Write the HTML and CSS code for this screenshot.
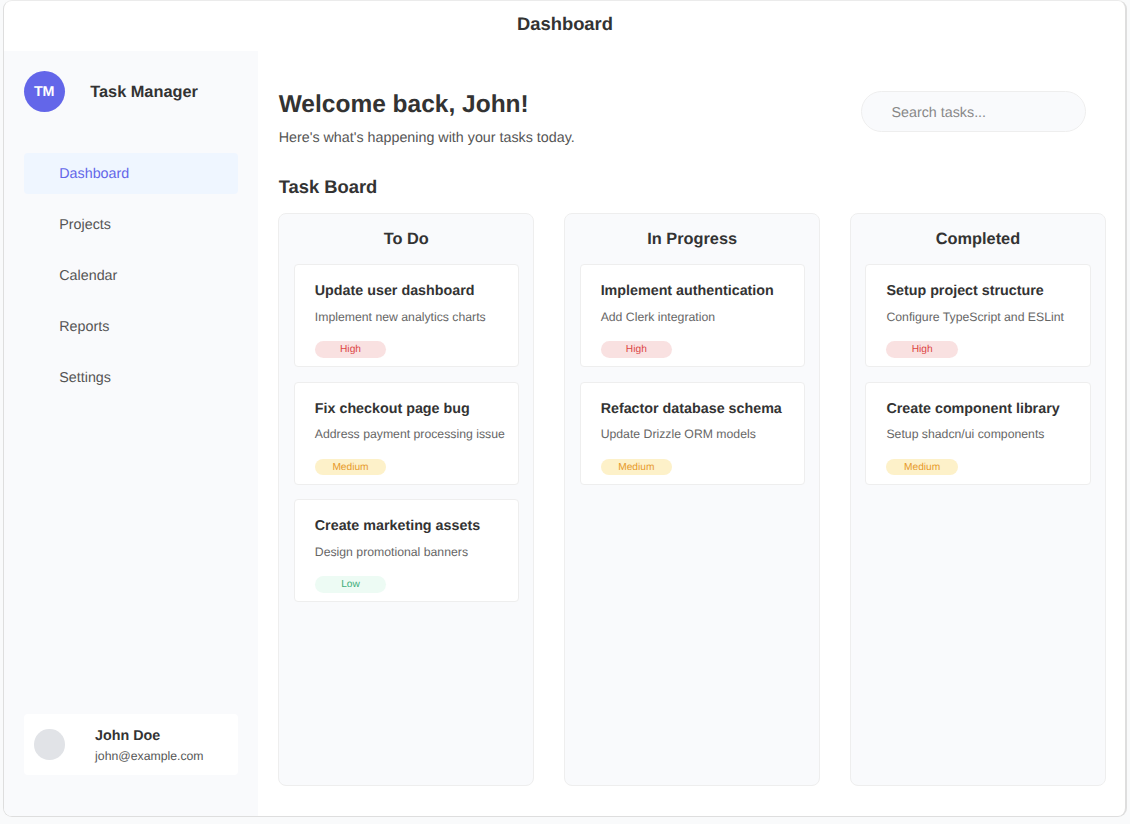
FILE: index.html
```html
<!DOCTYPE html>
<html lang="en">
<head>
<meta charset="utf-8">
<title>Dashboard</title>
<link rel="stylesheet" href="styles.css">
</head>
<body>
<div class="window">
  <header class="titlebar">Dashboard</header>
  <div class="body">
    <aside class="sidebar">
      <div class="brand"><span class="logo">TM</span><span class="brand-name">Task Manager</span></div>
      <nav class="nav">
        <a class="nav-item active">Dashboard</a>
        <a class="nav-item">Projects</a>
        <a class="nav-item">Calendar</a>
        <a class="nav-item">Reports</a>
        <a class="nav-item">Settings</a>
      </nav>
      <div class="user">
        <span class="avatar"></span>
        <div><div class="user-name">John Doe</div><div class="user-mail">john@example.com</div></div>
      </div>
    </aside>
    <main class="main">
      <div class="intro">
        <div><h1 class="welcome">Welcome back, John!</h1><p class="sub">Here's what's happening with your tasks today.</p></div>
        <div class="search">Search tasks...</div>
      </div>
      <h2 class="board-title">Task Board</h2>
      <div class="board">
        <section class="column">
          <h3 class="column-title">To Do</h3>
          <article class="card"><h4 class="card-title">Update user dashboard</h4><p class="card-text">Implement new analytics charts</p><span class="pill high">High</span></article>
          <article class="card"><h4 class="card-title">Fix checkout page bug</h4><p class="card-text">Address payment processing issue</p><span class="pill medium">Medium</span></article>
          <article class="card"><h4 class="card-title">Create marketing assets</h4><p class="card-text">Design promotional banners</p><span class="pill low">Low</span></article>
        </section>
        <section class="column">
          <h3 class="column-title">In Progress</h3>
          <article class="card"><h4 class="card-title">Implement authentication</h4><p class="card-text">Add Clerk integration</p><span class="pill high">High</span></article>
          <article class="card"><h4 class="card-title">Refactor database schema</h4><p class="card-text">Update Drizzle ORM models</p><span class="pill medium">Medium</span></article>
        </section>
        <section class="column">
          <h3 class="column-title">Completed</h3>
          <article class="card"><h4 class="card-title">Setup project structure</h4><p class="card-text">Configure TypeScript and ESLint</p><span class="pill high">High</span></article>
          <article class="card"><h4 class="card-title">Create component library</h4><p class="card-text">Setup shadcn/ui components</p><span class="pill medium">Medium</span></article>
        </section>
      </div>
    </main>
  </div>
</div>
</body>
</html>
```
FILE: styles.css
```css
* { box-sizing: border-box; margin: 0; }
body {
  height: 824px;
  padding: 0 3px 7px 3px;
  background: #f9fafb;
  color: #333;
  font-family: "Liberation Sans", Arial, sans-serif;
  font-size: 14.3px;
  text-rendering: geometricPrecision;
  overflow: hidden;
}
.window {
  width: 1124px;
  height: 817px;
  display: flex;
  flex-direction: column;
  background: #fff;
  border: 1px solid #dedede;
  border-top-color: #ebebeb;
  border-right-width: 2px;
  border-radius: 9px;
  overflow: hidden;
}
.titlebar {
  height: 49.5px;
  flex: none;
  padding: 12px 0 0 1px;
  line-height: 22px;
  text-align: center;
  font-size: 18.37px;
  font-weight: 700;
}
.body { flex: 1; display: flex; min-height: 0; }
.sidebar {
  width: 254.4px;
  flex: none;
  display: flex;
  flex-direction: column;
  padding: 20px 20px 41px 20px;
  background: #f9fafc;
}
.brand { display: flex; align-items: center; gap: 25.5px; height: 41px; }
.logo {
  width: 41px;
  height: 41px;
  margin-left: -0.3px;
  border-radius: 50%;
  background: #6366e9;
  color: #fff;
  font-weight: 700;
  line-height: 43px;
  text-align: center;
}
.brand-name { padding-top: 2px; font-size: 16.33px; font-weight: 700; }
.nav { display: flex; flex-direction: column; gap: 10px; margin-top: 41.5px; }
.nav-item { height: 41px; padding-left: 35.3px; line-height: 42px; border-radius: 4px; color: #555; }
.active { background: #eff6ff; color: #6366e9; }
.user {
  height: 61px;
  margin-top: auto;
  display: flex;
  align-items: center;
  gap: 30.5px;
  padding: 0 10px;
  background: #fff;
  border-radius: 4px;
}
.avatar { width: 30.6px; height: 30.6px; border-radius: 50%; background: #e1e3e7; }
.user-name { padding-top: 3px; font-weight: 700; line-height: 20px; }
.user-mail { font-size: 12.25px; line-height: 21px; color: #555; }
.main { flex: 1; display: flex; flex-direction: column; padding: 40px 19px 30px 20.3px; }
.intro { display: flex; justify-content: space-between; height: 83px; padding-right: 20px; }
.welcome { font-size: 24.5px; line-height: 28px; margin-top: 0; }
.sub { margin-top: 9px; line-height: 20px; color: #555; }
.search {
  width: 225.5px;
  height: 41.5px;
  padding-left: 30px;
  border: 1px solid #eee;
  border-radius: 21px;
  background: #f9fafc;
  line-height: 42px;
  color: #888;
}
.board-title { height: 39.5px; font-size: 18.37px; line-height: 26px; }
.board { flex: 1; display: grid; grid-template-columns: repeat(3, 1fr); gap: 29.8px; margin-left: -0.4px; }
.column {
  display: flex;
  flex-direction: column;
  gap: 14.4px;
  padding: 15px 14.5px;
  background: #f9fafc;
  border: 1px solid #eee;
  border-radius: 8px;
}
.column-title { height: 21px; font-size: 16.33px; line-height: 20px; text-align: center; }
.card {
  height: 103px;
  padding: 16px 0 0 20px;
  background: #fff;
  border: 1px solid #eee;
  border-radius: 4px;
  white-space: nowrap;
}
.card-title { font-size: 14.3px; line-height: 20px; }
.card-text { margin-top: 6.6px; font-size: 12.25px; line-height: 18px; color: #666; }
.pill {
  display: block;
  width: 71.4px;
  height: 16.3px;
  margin-top: 15.5px;
  border-radius: 9px;
  font-size: 10.2px;
  line-height: 17.8px;
  text-align: center;
}
.high { background: #f9e1e1; color: #dc4545; }
.medium { background: #fdf1c9; color: #e79a2b; }
.low { background: #edfbf4; color: #3fae7c; }
```
